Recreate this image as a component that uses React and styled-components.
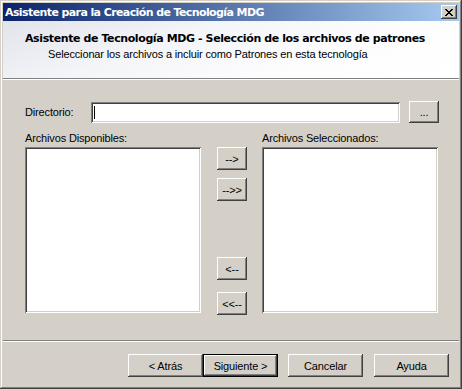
import React from 'react'
import styled, { createGlobalStyle, css } from 'styled-components'

const GlobalStyle = createGlobalStyle`
  html, body {
    margin: 0;
    padding: 0;
    background: #d4d0c8;
  }
  body {
    font-family: "Liberation Sans", Arial, sans-serif;
    font-size: 11px;
    letter-spacing: -0.15px;
    color: #000;
  }
`

const raised = css`
  border: none;
  background: #d4d0c8;
  box-shadow: inset -1px -1px #404040, inset 1px 1px #fff, inset -2px -2px #808080;
`

const sunken = css`
  background: #fff;
  box-shadow: inset 1px 1px #808080, inset -1px -1px #fff, inset 2px 2px #404040, inset -2px -2px #d4d0c8;
`

function CloseIcon() {
  return (
    <svg width='8' height='7' viewBox='0 0 8 7' shapeRendering='crispEdges'>
      <path d='M0 0h2v1h-2zM6 0h2v1h-2zM1 1h2v1h-2zM5 1h2v1h-2zM2 2h4v1h-4zM3 3h2v1h-2zM2 4h4v1h-4zM1 5h2v1h-2zM5 5h2v1h-2zM0 6h2v1h-2zM6 6h2v1h-2z' fill='#000' />
    </svg>
  )
}

function App() {
  return (
    <>
      <GlobalStyle />
      <Window>
        <TitleBar>
          <Caption>Asistente para la Creación de Tecnología MDG</Caption>
          <CloseButton><CloseIcon /></CloseButton>
        </TitleBar>
        <Header>
          <HeaderTitle>Asistente de Tecnología MDG - Selección de los archivos de patrones</HeaderTitle>
          <HeaderText>Seleccionar los archivos a incluir como Patrones en esta tecnología</HeaderText>
        </Header>
        <Body>
          <DirRow>
            <Label>Directorio:</Label>
            <Field><Caret /></Field>
            <Button $w={30} $h={22}>...</Button>
          </DirRow>
          <Lists>
            <Column>
              <Label>Archivos Disponibles:</Label>
              <ListBox />
            </Column>
            <Movers>
              <Button $w={30}>--&gt;</Button>
              <Button $w={30} $top={8}>--&gt;&gt;</Button>
              <Button $w={30} $top={56}>&lt;--</Button>
              <Button $w={30} $top={12}>&lt;&lt;--</Button>
            </Movers>
            <Column>
              <Label>Archivos Seleccionados:</Label>
              <ListBox />
            </Column>
          </Lists>
        </Body>
        <Separator />
        <Footer>
          <Button>&lt; Atrás</Button>
          <Button $default>Siguiente &gt;</Button>
          <Button $left={10}>Cancelar</Button>
          <Button $left={11}>Ayuda</Button>
        </Footer>
      </Window>
    </>
  )
}

const Window = styled.div`
  width: 462px;
  height: 389px;
  box-sizing: border-box;
  padding: 3px;
  display: flex;
  flex-direction: column;
  background: #d4d0c8;
  box-shadow: inset -1px -1px #404040, inset 1px 1px #d4d0c8, inset -2px -2px #808080, inset 2px 2px #fff;
`

const TitleBar = styled.div`
  height: 18px;
  display: flex;
  align-items: center;
  justify-content: space-between;
  padding: 0 2px 0 2px;
  background: linear-gradient(to right, #0a246a, #a6caf0);
`

const Caption = styled.span`
  color: #fff;
  font-family: "DejaVu Sans", Verdana, sans-serif;
  font-weight: bold;
  font-size: 11px;
  letter-spacing: -0.6px;
`

const CloseButton = styled.div`
  ${raised}
  width: 16px;
  height: 14px;
  display: flex;
  align-items: center;
  justify-content: center;
`

const Header = styled.div`
  height: 58px;
  box-sizing: border-box;
  padding: 11px 0 0 22px;
  background: linear-gradient(160deg, #e2e4ec 0%, #f4f5f8 35%, #fdfdfe 70%, #fff 100%);
  border-bottom: 1px solid #808080;
  box-shadow: 0 1px #fff;
`

const HeaderTitle = styled.div`
  font-family: "DejaVu Sans", Verdana, sans-serif;
  font-weight: bold;
  font-size: 11px;
  letter-spacing: -0.4px;
  line-height: 14px;
`

const HeaderText = styled.div`
  padding-left: 23px;
  line-height: 14px;
  margin-top: 1px;
`

const Body = styled.div`
  padding: 22px 19px 0 22px;
  display: flex;
  flex-direction: column;
`

const DirRow = styled.div`
  display: flex;
  align-items: center;
  height: 22px;
`

const Label = styled.div`
  line-height: 13px;
  width: 66px;
  white-space: nowrap;
`

const Field = styled.div`
  ${sunken}
  width: 309px;
  height: 21px;
  margin-right: 9px;
  display: flex;
  align-items: center;
  padding-left: 3px;
  box-sizing: border-box;
`

const Caret = styled.span`
  width: 1px;
  height: 13px;
  background: #000;
`

const Lists = styled.div`
  display: flex;
  margin-top: 9px;
`

const Column = styled.div`
  display: flex;
  flex-direction: column;
  gap: 2px;
`

const ListBox = styled.div`
  ${sunken}
  width: 176px;
  height: 166px;
`

const Movers = styled.div`
  display: flex;
  flex-direction: column;
  padding: 15px 15px 0 16px;
`

const Button = styled.button`
  ${raised}
  width: ${p => p.$w || 75}px;
  height: ${p => p.$h || 23}px;
  margin: ${p => p.$top || 0}px 0 0 ${p => p.$left || 0}px;
  padding: 0;
  font-family: "Liberation Sans", Arial, sans-serif;
  font-size: 11px;
  letter-spacing: -0.15px;
  color: #000;
  flex-shrink: 0;
  ${p => p.$default && css`
    box-shadow: inset 0 0 0 1px #000, inset -2px -2px #404040, inset 2px 2px #fff, inset -3px -3px #808080;
  `}
`

const Separator = styled.div`
  margin-top: 25px;
  border-top: 1px solid #808080;
  border-bottom: 1px solid #fff;
`

const Footer = styled.div`
  display: flex;
  justify-content: flex-end;
  padding: 12px 10px 0 0;
`

export default App
